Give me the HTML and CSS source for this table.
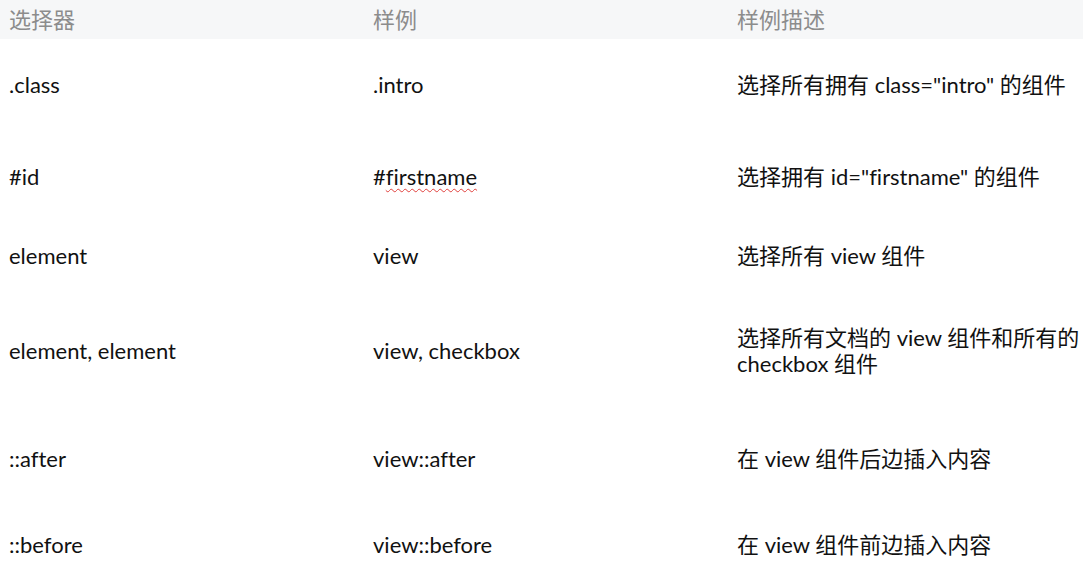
FILE: index.html
```html
<!DOCTYPE html>
<html lang="zh-CN">
<head>
  <meta charset="UTF-8" />
  <title>选择器</title>
  <link rel="stylesheet" href="styles.css">
</head>
<body>
  <table class="sel-table">
    <colgroup>
      <col class="col-a">
      <col class="col-b">
      <col class="col-c">
    </colgroup>
    <thead>
      <tr>
        <th>选择器</th>
        <th>样例</th>
        <th>样例描述</th>
      </tr>
    </thead>
    <tbody>
      <tr class="r1">
        <td>.class</td>
        <td>.intro</td>
        <td>选择所有拥有 class="intro" 的组件</td>
      </tr>
      <tr class="r2">
        <td>#id</td>
        <td>#<span class="typo">firstname</span></td>
        <td>选择拥有 id="firstname" 的组件</td>
      </tr>
      <tr class="r3">
        <td>element</td>
        <td>view</td>
        <td>选择所有 view 组件</td>
      </tr>
      <tr class="r4">
        <td>element, element</td>
        <td>view, checkbox</td>
        <td>选择所有文档的 view 组件和所有的 checkbox 组件</td>
      </tr>
      <tr class="r5">
        <td>::after</td>
        <td>view::after</td>
        <td>在 view 组件后边插入内容</td>
      </tr>
      <tr class="r6">
        <td>::before</td>
        <td>view::before</td>
        <td>在 view 组件前边插入内容</td>
      </tr>
    </tbody>
  </table>
</body>
</html>
```

FILE: styles.css
```css
body {
  margin: 0;
  background: #fff;
  font-family: 'Lato', 'Noto Sans CJK SC', sans-serif;
  font-variant-ligatures: none;
  color: #111;
  overflow: hidden;
}

.sel-table {
  width: 1083px;
  border-collapse: collapse;
  table-layout: fixed;
}

.col-a,
.col-b {
  width: 364px;
}

.col-c {
  width: 355px;
}

.sel-table th,
.sel-table td {
  padding: 0 0 0 9px;
  text-align: left;
  vertical-align: middle;
  font-size: 22px;
  line-height: 26px;
}

.sel-table th {
  height: 39px;
  background: #f6f7f8;
  color: #8c8c8c;
  font-weight: normal;
}

.r1 td { height: 92px; }
.r2 td { height: 92px; }
.r3 td { height: 66px; }
.r4 td { height: 124px; }
.r5 td { height: 92px; }
.r6 td { height: 80px; }

.typo {
  text-decoration: underline wavy #e0403c;
  text-decoration-thickness: 1px;
  text-underline-offset: 3px;
}
```
